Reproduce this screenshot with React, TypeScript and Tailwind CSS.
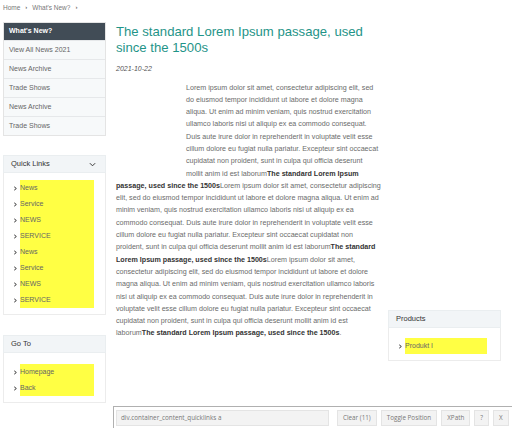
import React from "react";

const LOREM =
  "Lorem ipsum dolor sit amet, consectetur adipiscing elit, sed do eiusmod tempor incididunt ut labore et dolore magna aliqua. Ut enim ad minim veniam, quis nostrud exercitation ullamco laboris nisi ut aliquip ex ea commodo consequat. Duis aute irure dolor in reprehenderit in voluptate velit esse cillum dolore eu fugiat nulla pariatur. Excepteur sint occaecat cupidatat non proident, sunt in culpa qui officia deserunt mollit anim id est laborum";
const BOLD = "The standard Lorem Ipsum passage, used since the 1500s";

function Arrow() {
  return (
    <svg width="5" height="5" viewBox="0 0 6 6" className="shrink-0">
      <path d="M1.5 1 L4 3 L1.5 5" fill="none" stroke="#333" strokeWidth="1.2" />
    </svg>
  );
}

function LinkList({ items, top }: { items: string[]; top: string }) {
  return (
    <div className={`border border-t-0 border-[#ececec] bg-white ${top} pb-[6px]`}>
      <ul className="flex flex-col">
        {items.map((t, i) => (
          <li key={i} className="flex items-center h-[16px] pl-[9px]">
            <Arrow />
            <span className="ml-[2px] bg-[#ffff44] w-[74px] h-[16px] leading-[16px] text-[#666]">{t}</span>
          </li>
        ))}
      </ul>
    </div>
  );
}

function BoxHeader({ title, chevron }: { title: string; chevron?: boolean }) {
  return (
    <div className="h-[18px] bg-[#f2f5f7] border border-[#eaeef0] flex items-center justify-between pl-[7px] pr-[9px] text-[#333] text-[7.5px] font-medium">
      <span>{title}</span>
      {chevron && (
        <svg width="7" height="5" viewBox="0 0 8 5">
          <path d="M1 1 L4 4 L7 1" fill="none" stroke="#333" strokeWidth="1.1" />
        </svg>
      )}
    </div>
  );
}

function ToolButton({ children, className = "" }: { children: React.ReactNode; className?: string }) {
  return (
    <div
      className={`h-[16px] px-[5px] bg-[#f3f3f3] border border-[#e4e4e4] flex items-center whitespace-nowrap shrink-0 ${className}`}
    >
      {children}
    </div>
  );
}

export default function App() {
  const menu = ["View All News 2021", "News Archive", "Trade Shows", "News Archive", "Trade Shows"];
  return (
    <div
      className="relative w-[512px] h-[428px] overflow-hidden bg-white text-[7.15px]"
      style={{ fontFamily: '"Liberation Sans", Arial, sans-serif' }}
    >
      {/* breadcrumb */}
      <div className="flex items-center h-[15px] pl-[3px] gap-[5px] text-[#777] text-[6.5px]">
        <span>Home</span>
        <span className="text-[#333] text-[6px]">›</span>
        <span>What&apos;s New?</span>
        <span className="text-[#333] text-[6px]">›</span>
      </div>

      <div className="flex mt-[7px]">
        {/* left column */}
        <div className="ml-[3px] w-[103px] flex flex-col text-[7px]">
          <div className="border border-[#e4e4e4]">
            <div className="h-[17px] bg-[#414c56] text-white font-bold flex items-center pl-[5px]">
              What&apos;s New?
            </div>
            {menu.map((m, i) => (
              <div
                key={i}
                className="h-[19px] bg-[#f7f9fa] border-t border-[#e6e8ea] flex items-center pl-[5px] text-[#666]"
              >
                {m}
              </div>
            ))}
          </div>

          <div className="mt-[19px]">
            <BoxHeader title="Quick Links" chevron />
            <LinkList
              top="pt-[7px]"
              items={["News", "Service", "NEWS", "SERVICE", "News", "Service", "NEWS", "SERVICE"]}
            />
          </div>

          <div className="mt-[20px]">
            <BoxHeader title="Go To" />
            <LinkList top="pt-[11px]" items={["Homepage", "Back"]} />
          </div>
        </div>

        {/* main column */}
        <div className="ml-[10px] w-[265px] pt-[2px]">
          <h1 className="text-[#1f9488] text-[13.15px] leading-[16px] font-normal">
            The standard Lorem Ipsum passage, used since the 1500s
          </h1>
          <div className="mt-[8px] italic text-[#555] text-[7px]">2021-10-22</div>
          <div className="mt-[7px] text-[#6b6b6b] leading-[12.3px]">
            <div className="float-left w-[66px] h-[98px] mr-[4px]" />
            {LOREM}
            <b className="text-[#333]">{BOLD}</b>
            {LOREM}
            <b className="text-[#333]">{BOLD}</b>
            {LOREM}
            <b className="text-[#333]">{BOLD}</b>.
          </div>
        </div>

        {/* right column */}
        <div className="ml-[7px] w-[113px] pt-[288px] text-[7px]">
          <BoxHeader title="Products" />
          <div className="border border-t-0 border-[#ececec] bg-white pt-[10px] pb-[6px]">
            <div className="flex items-center h-[16px] pl-[9px]">
              <Arrow />
              <span className="ml-[2px] bg-[#ffff44] w-[82px] h-[16px] leading-[16px] text-[#666]">Produkt I</span>
            </div>
          </div>
        </div>
      </div>

      {/* toolbar */}
      <div
        className="absolute left-[113px] right-0 bottom-0 h-[22px] bg-white border-t border-l border-[#b0b0b0] flex items-center pl-[2px] gap-[4px] text-[6.3px] text-[#777]"
        style={{ fontFamily: '"Open Sans", "DejaVu Sans", sans-serif' }}
      >
        <div className="w-[213px] h-[16px] bg-[#f3f3f3] border border-[#e4e4e4] flex items-center pl-[4px] whitespace-nowrap shrink-0">
          div.container_content_quicklinks a
        </div>
        <div className="flex-1" />
        <ToolButton>Clear (11)</ToolButton>
        <ToolButton>Toggle Position</ToolButton>
        <ToolButton>XPath</ToolButton>
        <ToolButton>?</ToolButton>
        <ToolButton className="mr-[7px]">X</ToolButton>
      </div>
    </div>
  );
}
